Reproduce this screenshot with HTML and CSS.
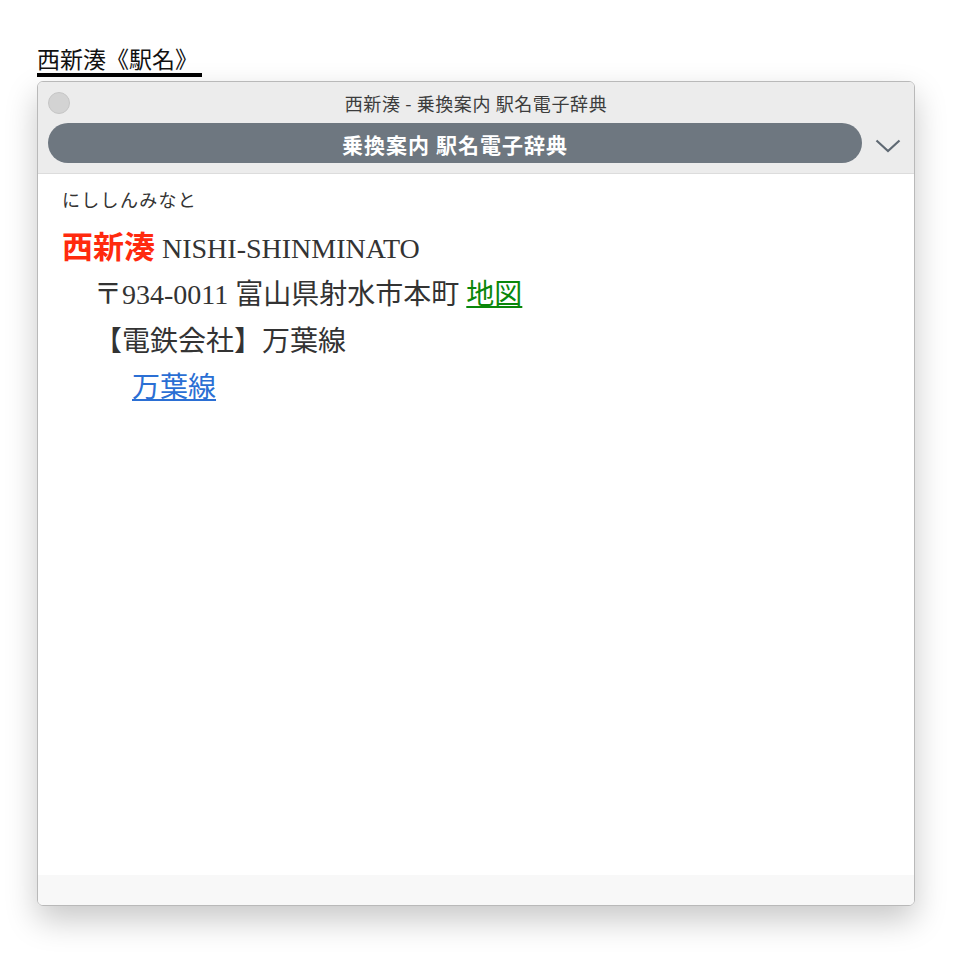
FILE: index.html
```html
<!DOCTYPE html>
<html lang="ja">
	<head>
		<meta charset="UTF-8">
		<title>西新湊《駅名》</title>
		<link rel="stylesheet" href="styles.css">
	</head>
	<body>
		<div class="heading"><span class="heading-text">西新湊《駅名》</span></div>
		<div class="window">
			<div class="titlebar">
				<div class="title-row">
					<div class="close"></div>
					<div class="title">西新湊 - 乗換案内 駅名電子辞典</div>
					<div class="spacer"></div>
				</div>
				<div class="pill-row">
					<div class="pill">乗換案内 駅名電子辞典</div>
					<div class="chevron">
						<svg width="26" height="14" viewBox="0 0 26 14"><polyline points="1.5,1.5 13,12 24.5,1.5" fill="none" stroke="#5f6973" stroke-width="2.2"/></svg>
					</div>
				</div>
			</div>
			<div class="content">
				<div class="kana">にししんみなと</div>
				<div class="name"><span class="kanji">西新湊</span> NISHI-SHINMINATO</div>
				<div class="line indent">〒934-0011 富山県射水市本町 <a class="map" href="#">地図</a></div>
				<div class="line indent">【電鉄会社】万葉線</div>
				<div class="line indent2"><a class="route" href="#">万葉線</a></div>
			</div>
			<div class="footer"></div>
		</div>
	</body>
</html>
```
FILE: styles.css
```css
body {
	margin: 0;
	padding: 0 37px 66px;
	background: #fff;
	font-family: "Noto Sans CJK JP", "Noto Sans", sans-serif;
}
.heading {
	padding-top: 44px;
	height: 33px;
}
.heading-text {
	display: inline-block;
	font-size: 23px;
	line-height: 29px;
	padding-right: 4px;
	border-bottom: 4px solid #000;
	color: #111;
}
.window {
	margin-top: 4px;
	width: 878px;
	box-sizing: border-box;
	border: 1px solid #b9b9b9;
	border-radius: 6px;
	overflow: hidden;
	box-shadow: 0 14px 32px rgba(0, 0, 0, 0.22);
}
.titlebar {
	background: #ececec;
	padding: 8px 0 10px 10px;
	border-bottom: 1px solid #dcdcdc;
}
.title-row {
	display: grid;
	grid-template-columns: 22px 1fr 22px;
	align-items: center;
	padding-right: 10px;
	height: 22px;
}
.close {
	width: 20px;
	height: 20px;
	border-radius: 50%;
	background: #d3d3d3;
	border: 1px solid #c6c6c6;
}
.title {
	text-align: center;
	font-size: 18px;
	letter-spacing: 0.6px;
	color: #3c3c3c;
}
.pill-row {
	display: flex;
	margin-top: 11px;
	height: 40px;
}
.pill {
	flex: 1;
	background: #6e7780;
	border-radius: 20px;
	color: #fff;
	font-size: 21px;
	font-weight: bold;
	letter-spacing: 1px;
	text-align: center;
	line-height: 42px;
}
.chevron {
	width: 52px;
	display: flex;
	align-items: center;
	justify-content: center;
	padding-top: 6px;
	box-sizing: border-box;
}
.content {
	background: #fff;
	height: 701px;
	padding: 4px 24px 0;
	box-sizing: border-box;
	font-family: "Liberation Serif", "Noto Sans CJK JP", serif;
	font-size: 28px;
	line-height: 46.5px;
	color: #333;
}
.kana {
	font-size: 18px;
	letter-spacing: 1.3px;
}
.kanji {
	color: #ff2a0e;
	font-weight: bold;
	font-size: 31px;
}
.indent {
	padding-left: 32px;
}
.indent2 {
	padding-left: 70px;
}
a.map {
	color: #0a870a;
}
a.route {
	color: #2b6fd4;
}
.footer {
	height: 30px;
	background: #f8f8f8;
}
```
